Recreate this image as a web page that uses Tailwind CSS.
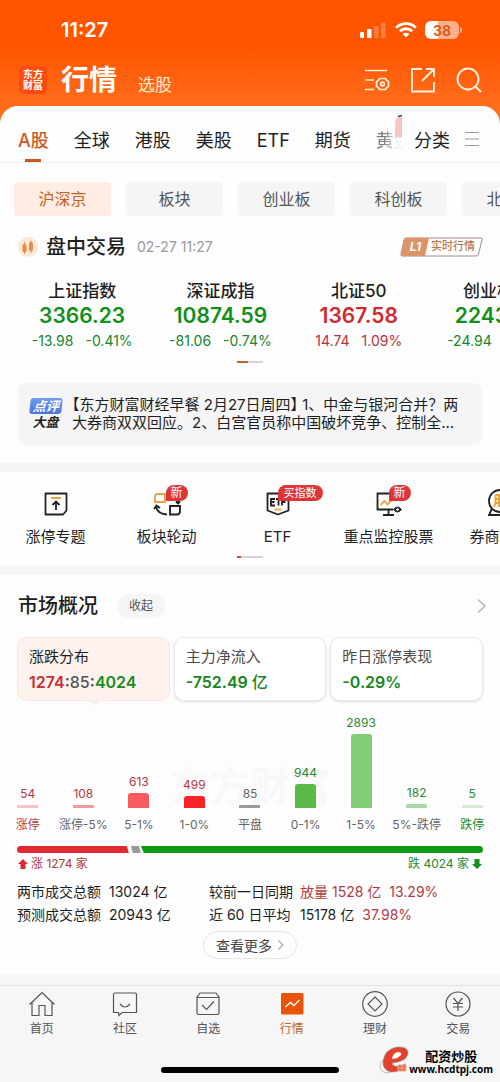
<!DOCTYPE html>
<html lang="zh-CN">
<head>
<meta charset="utf-8">
<meta name="viewport" content="width=device-width, initial-scale=1">
<title>行情</title>
<script src="https://cdn.jsdelivr.net/npm/@tailwindcss/browser@4"></script>
</head>
<body class="bg-[#fdfdfd] font-['Inter','Noto_Sans_CJK_SC',sans-serif] text-[#1f1f1f] overflow-x-hidden">
<div class="relative flex flex-col">

<!-- Status bar and page title -->
<header class="bg-linear-to-b from-[#ff5500] from-40% to-[#ff7420] pb-[18px] text-white">
  <div class="flex h-[60px] items-center justify-between pr-[38px] pl-[61px]">
    <time class="text-[20px] font-semibold">11:27</time>
    <div class="flex items-center gap-2">
      <svg class="h-4 w-[27px]" viewBox="0 0 27 16" fill="#fff"><rect x="0" y="10" width="4" height="6" rx="1"/><rect x="7" y="7" width="4.500" height="9" rx="1"/><rect x="14" y="4" width="4.500" height="12" rx="1" opacity=".25"/><rect x="21" y="0" width="4.500" height="16" rx="1" opacity=".25"/></svg>
      <svg class="h-4 w-[22px]" viewBox="0 0 22 16" fill="none" stroke="#fff" stroke-width="2.800"><path d="M1.200 5.700a14 14 0 0 1 19.600 0M4.800 9.300a8.800 8.800 0 0 1 12.400 0"/><path d="M11 15.500 7.600 12a4.900 4.900 0 0 1 6.800 0z" fill="#fff" stroke="none"/></svg>
      <div class="flex items-center gap-px">
        <div class="flex h-[18px] w-[34px] items-center justify-center rounded-[6px] bg-linear-to-r from-white from-38% to-[#ffb08a] to-38% text-[14px] font-bold text-[#d9601f]">38</div>
        <div class="h-[6px] w-[2px] rounded-r-full bg-[#ffb08a]"></div>
      </div>
    </div>
  </div>
  <div class="flex h-[46px] items-center pr-[18px] pb-[6px] pl-[19px]">
    <div class="grid h-[28px] w-[28px] shrink-0 place-content-center rounded-[5px] bg-[#fb4a12] text-center text-[10px] leading-[11px] font-bold">东方<br>财富</div>
    <h1 class="ml-[14px] text-[28px] leading-10 font-bold">行情</h1>
    <a href="#" class="mt-[10px] ml-[21px] text-[17px] leading-6 text-[#ffe8c8]">选股</a>
    <div class="ml-auto flex items-center gap-5 text-[#fff0dc]">
      <button aria-label="设置"><svg class="h-[26px] w-[26px]" viewBox="0 0 26 26" fill="none" stroke="currentColor" stroke-width="1.700"><path d="M1 3.500h22M1 13h9M1 22.500h9"/><path d="M15.500 11.500h6l1 1.800 2 1.200v5l-2 1.200-1 1.800h-6l-1-1.800-2-1.200v-5l2-1.200z" stroke-linejoin="round"/><circle cx="18.500" cy="17" r="1.800"/></svg></button>
      <button aria-label="分享"><svg class="h-[26px] w-[26px]" viewBox="0 0 26 26" fill="none" stroke="currentColor" stroke-width="1.800"><path d="M12 2H2v22.500h22V15M16 2h8v8M24 2 12 14"/></svg></button>
      <button aria-label="搜索"><svg class="h-[26px] w-[26px]" viewBox="0 0 26 26" fill="none" stroke="currentColor" stroke-width="1.900"><circle cx="12" cy="12" r="10.500"/><path d="m19.500 19.500 5.500 5.500"/></svg></button>
    </div>
  </div>
</header>

<main class="-mt-[18px] rounded-t-[18px] bg-[#fdfdfd]">
  <!-- Market tabs -->
  <nav class="flex h-[57px] border-b border-[#ececec] pr-5 pl-[18px] text-[18px] whitespace-nowrap">
    <div class="flex min-w-0 flex-1 gap-[25px] overflow-hidden">
      <a href="#" class="flex flex-col items-center pt-[21px] font-medium text-[#cc5a1e]"><span class="leading-7">A股</span><span class="mt-1 h-[3px] w-4 bg-[#c65a22]"></span></a>
      <a href="#" class="pt-[21px] leading-7">全球</a>
      <a href="#" class="pt-[21px] leading-7">港股</a>
      <a href="#" class="pt-[21px] leading-7">美股</a>
      <a href="#" class="pt-[21px] leading-7">ETF</a>
      <a href="#" class="pt-[21px] leading-7">期货</a>
      <a href="#" class="relative bg-linear-to-r from-[#777] from-20% to-[#eee] to-60% bg-clip-text pt-[21px] leading-7 text-transparent">黄金<svg class="absolute top-[9px] left-[18px] h-[22px] w-[9px]" viewBox="0 0 9 22"><path d="M1 22V8Q1 2 9 2v20z" fill="#fbc4c4"/><path d="M4 2q2-2 5-1" stroke="#444" stroke-width="1.500" fill="none"/></svg></a>
    </div>
    <a href="#" class="pt-[21px] pl-3 leading-7">分类</a>
    <button aria-label="菜单" class="ml-[14px] pt-[10px]"><svg class="h-4 w-4" viewBox="0 0 16 16" stroke="#999" stroke-width="1.200"><path d="M1 1.500h14M1 8h14M1 14.500h14"/></svg></button>
  </nav>

  <!-- Board filter -->
  <div class="mt-[19px] flex gap-[15px] overflow-hidden pl-[14px] text-[16px] text-[#555]">
    <button class="h-[34px] w-[97px] shrink-0 rounded-[4px] bg-[#ffece2] text-[#c85f24]">沪深京</button>
    <button class="h-[34px] w-[97px] shrink-0 rounded-[4px] bg-[#f5f5f5]">板块</button>
    <button class="h-[34px] w-[97px] shrink-0 rounded-[4px] bg-[#f5f5f5]">创业板</button>
    <button class="h-[34px] w-[97px] shrink-0 rounded-[4px] bg-[#f5f5f5]">科创板</button>
    <button class="h-[34px] w-[97px] shrink-0 rounded-[4px] bg-[#f5f5f5]">北交所</button>
  </div>

  <div class="flex h-[61px] items-center pr-[17px] pl-[18px]">
    <svg class="h-5 w-5" viewBox="0 0 20 20"><circle cx="10" cy="10" r="10" fill="#fde8d8"/><g fill="#e58d48"><rect x="4.500" y="7" width="4" height="8" rx="1.500"/><rect x="11" y="5" width="4" height="9" rx="1.500"/><path d="M6 5h1v12H6zM12.500 3.500h1v12.500h-1z"/></g></svg>
    <h2 class="ml-2 text-[20px] font-medium">盘中交易</h2>
    <time class="ml-[11px] text-[14px] text-[#999]">02-27 11:27</time>
    <a href="#" class="relative ml-auto flex h-[20px] w-[83px] items-center text-[11px] font-medium text-[#b87650]">
      <svg class="absolute inset-0 h-[20px] w-[83px]" viewBox="0 0 83 20"><path d="M6 1h75q1.500 0 1 2l-3.500 14q-.5 2-2.500 2H2q-1.500 0-1-2L4 3q.5-2 2-2z" fill="#fff" stroke="#a08b80"/><path d="M6 1h23l-4 18H2q-1.500 0-1-2L4 3q.5-2 2-2z" fill="#dc9566"/></svg>
      <span class="relative w-[31px] text-center text-[12px] font-bold text-white italic">L1</span><span class="relative">实时行情</span>
    </a>
  </div>

  <!-- Index quotes -->
  <div class="flex overflow-hidden pt-[2px] pl-[13px] text-center leading-6 whitespace-nowrap text-[#15862a]">
    <div class="flex w-[28.4%] shrink-0 flex-col gap-px"><h3 class="text-[17px] font-medium text-[#1f1f1f]">上证指数</h3><p class="text-[21px] font-semibold text-[#12901b]">3366.23</p><p class="flex justify-center gap-3 text-[14px]"><span>-13.98</span><span>-0.41%</span></p></div>
    <div class="flex w-[28.4%] shrink-0 flex-col gap-px"><h3 class="text-[17px] font-medium text-[#1f1f1f]">深证成指</h3><p class="text-[21px] font-semibold text-[#12901b]">10874.59</p><p class="flex justify-center gap-3 text-[14px]"><span>-81.06</span><span>-0.74%</span></p></div>
    <div class="flex w-[28.4%] shrink-0 flex-col gap-px text-[#b5303c]"><h3 class="text-[17px] font-medium text-[#1f1f1f]">北证50</h3><p class="text-[21px] font-semibold text-[#d02a30]">1367.58</p><p class="flex justify-center gap-3 text-[14px]"><span>14.74</span><span>1.09%</span></p></div>
    <div class="flex w-[28.4%] shrink-0 flex-col gap-px"><h3 class="text-[17px] font-medium text-[#1f1f1f]">创业板指</h3><p class="text-[21px] font-semibold text-[#12901b]">2243.67</p><p class="flex justify-center gap-3 text-[14px]"><span>-24.94</span><span>-1.10%</span></p></div>
  </div>
  <div class="mt-2 flex justify-center"><span class="h-[2px] w-[11px] bg-[#c8622e]"></span><span class="h-[2px] w-[15px] bg-[#d4d4d8]"></span></div>

  <!-- Market commentary -->
  <a href="#" class="mx-[18px] mt-5 flex rounded-[8px] bg-[#f5f5f5] py-[13px] pl-[11px]">
    <span class="flex w-[33px] shrink-0 flex-col items-center text-[13px] leading-4 font-bold italic">
      <span class="mt-[2px] w-8 -skew-x-6 rounded-[3px] bg-linear-to-b from-[#6f9cf2] to-[#4b74dc] text-center text-white">点评</span><span>大盘</span>
    </span>
    <span class="ml-[10px] text-[15px] leading-[18px] whitespace-nowrap"><span class="[font-feature-settings:'halt']">【</span>东方财富财经早餐 2月27日周四<span class="[font-feature-settings:'halt']">】</span> 1、中金与银河合并？两<br>大券商双双回应。2、白宫官员称中国破坏竞争、控制全...</span>
  </a>

  <div class="mt-[18px] h-[9px] bg-[#f5f5f5]"></div>

  <!-- Shortcuts -->
  <nav class="flex overflow-hidden pt-5 text-[15px] leading-[22px] whitespace-nowrap">
    <a href="#" class="flex w-[22.2%] shrink-0 flex-col items-center gap-[10px]">
      <svg class="h-6 w-6" viewBox="0 0 24 24" fill="none" stroke="#222" stroke-width="1.800"><path d="M1.500 1.500h21v17l-3.500 4H1.500z" stroke-linejoin="round"/><path d="M7 6h10" stroke="#eba53c" stroke-width="2"/><path d="M12 18V9.500M8.500 13 12 9.500l3.500 3.500"/></svg>涨停专题</a>
    <a href="#" class="flex w-[22.2%] shrink-0 flex-col items-center gap-[10px]">
      <span class="relative"><svg class="h-6 w-7" viewBox="0 0 28 24" fill="none" stroke="#222" stroke-width="1.900"><path d="M4 2h8v8H2V5q0-3 2-3z" stroke="#e6a549"/><path d="M17 14h10v5q0 3.500-3 3.500h-7zM3 14q1 8 11 8.500M1 17l2.500-3.500L7 16M25 7v4m-2-1.500 2 2 2-2"/></svg>
      <span class="absolute -top-[7px] left-[13px] rounded-[8px] rounded-bl-none bg-[#dc3639] px-[5px] text-[12px] leading-4 text-white">新</span></span>板块轮动</a>
    <a href="#" class="flex w-[22.2%] shrink-0 flex-col items-center gap-[10px]">
      <span class="relative"><svg class="h-6 w-6" viewBox="0 0 24 24" fill="none" stroke="#222" stroke-width="1.800"><path d="M1.500 1.500h21v17L12 22.500l-10.500-4z" stroke-linejoin="round"/><path d="M8.500 17.500h7" stroke="#eba53c"/><path d="M9 7H5v6.500h4M5 10h3.500M10 7h5M12.500 7v6.500M20 7h-4v6.500M16 10h3.500"/></svg>
      <span class="absolute -top-[7px] left-3 rounded-[8px] rounded-bl-none bg-[#dc3639] px-[6px] text-[11px] leading-4 text-white">买指数</span></span>ETF</a>
    <a href="#" class="flex w-[22.2%] shrink-0 flex-col items-center gap-[10px]">
      <span class="relative"><svg class="h-6 w-[26px]" viewBox="0 0 26 24" fill="none" stroke="#222" stroke-width="1.800"><path d="M25 9V1.500H1.500v16H17M12.500 17.500V23M7 23h11"/><path d="m4.500 13 4-4 3 3.500 4-4" stroke="#eba53c"/><path d="M17.500 17.500q4-5 8 0-4 5-8 0z" fill="#222" stroke-width="1"/><circle cx="21.500" cy="17.500" r="1.300" fill="#fff" stroke="none"/></svg>
      <span class="absolute -top-[7px] left-[13px] rounded-[8px] rounded-bl-none bg-[#dc3639] px-[5px] text-[12px] leading-4 text-white">新</span></span>重点监控股票</a>
    <a href="#" class="flex w-[22.2%] shrink-0 flex-col items-center gap-[10px]">
      <svg class="-mt-1 h-7 w-6" viewBox="0 0 24 28" fill="none" stroke="#222" stroke-width="1.800"><circle cx="12" cy="13" r="11"/><path d="M4 20.500 1 27h22l-3-6.500"/><path d="M7.500 7h3.500v12M7.500 7v8l-1.500 4M7.500 11H11M7.500 15H11M13.500 8H18M14 12h4l-4 7M14 14l4 5" stroke="#eba53c" stroke-width="2"/></svg>券商股票</a>
  </nav>
  <div class="mt-2 flex justify-center pb-2"><span class="h-[2px] w-1 bg-[#a85a38]"></span><span class="h-[2px] w-[22px] bg-[#d4d4d8]"></span></div>
  <div class="h-[9px] bg-[#f5f5f5]"></div>

  <!-- Market overview -->
  <section>
    <div class="flex h-[62px] items-center px-[18px]">
      <h2 class="text-[20px] font-medium">市场概况</h2>
      <button class="ml-[19px] h-6 rounded-full bg-[#f5f5f5] px-3 text-[12px] text-[#555]">收起</button>
      <a href="#" aria-label="更多" class="-mr-[5px] ml-auto"><svg class="h-4 w-[10px]" viewBox="0 0 10 16" fill="none" stroke="#b5b5b5" stroke-width="1.500"><path d="m1 1.500 7 6.500-7 6.500"/></svg></a>
    </div>
    <div class="grid grid-cols-3 gap-1 px-[17px] text-[15px]">
      <button class="relative h-16 rounded-[10px] border border-[#fae6de] bg-[#fef2ee] pl-[11px] text-left">
        <span class="block leading-5">涨跌分布</span><span class="mt-[5px] block text-[16px] leading-5 font-semibold whitespace-nowrap text-[#555]"><span class="text-[#c92f34]">1274</span>:<span class="font-medium">85</span>:<span class="text-[#188c20]">4024</span></span>
        <svg class="absolute -bottom-[6px] left-[69px] h-[6px] w-4" viewBox="0 0 16 6"><path d="M0 0h16q-3 0-5 3-3 4-6 0-2-3-5-3z" fill="#fdebe4"/></svg>
      </button>
      <button class="h-16 rounded-[10px] border border-[#ebebeb] bg-white pl-[11px] text-left shadow-sm">
        <span class="block leading-5 text-[#4c4c4c]">主力净流入</span><span class="mt-[5px] block text-[16px] leading-5 font-semibold text-[#178522]">-752.49 <span class="font-medium">亿</span></span>
      </button>
      <button class="h-16 rounded-[10px] border border-[#ebebeb] bg-white pl-[11px] text-left shadow-sm">
        <span class="block leading-5 text-[#4c4c4c]">昨日涨停表现</span><span class="mt-[5px] block text-[16px] leading-5 font-semibold text-[#178522]">-0.29%</span>
      </button>
    </div>

    <!-- Distribution chart -->
    <figure class="relative">
      <div aria-hidden="true" class="absolute inset-x-0 top-[62px] text-center text-[40px] leading-[48px] font-bold text-[#f8f8f8]">东方财富</div>
      <div class="relative grid h-[107px] grid-cols-9 items-end text-center text-[12px] leading-4 text-[#b23a41]">
        <div class="flex flex-col items-center gap-[3px]">54<i class="h-[3px] w-[21px] bg-[#f9c3c6]"></i></div>
        <div class="flex flex-col items-center gap-[3px]">108<i class="h-[3px] w-[21px] bg-[#f39a9e]"></i></div>
        <div class="flex flex-col items-center gap-[3px]">613<i class="h-[15px] w-[21px] rounded-t-[3px] bg-[#fa5b60]"></i></div>
        <div class="flex flex-col items-center gap-[3px]">499<i class="h-[12px] w-[21px] rounded-t-[3px] bg-[#f92227]"></i></div>
        <div class="flex flex-col items-center gap-[3px] text-[#666]">85<i class="h-[3px] w-[21px] bg-[#999]"></i></div>
        <div class="flex flex-col items-center gap-[3px] text-[#278a2c]">944<i class="h-[24px] w-[21px] rounded-t-[3px] bg-[#59b947]"></i></div>
        <div class="flex flex-col items-center gap-[3px] text-[#278a2c]">2893<i class="h-[74px] w-[21px] rounded-t-[3px] bg-[#83cc76]"></i></div>
        <div class="flex flex-col items-center gap-[3px] text-[#278a2c]">182<i class="h-[4px] w-[21px] rounded-t-[2px] bg-[#a9d9a4]"></i></div>
        <div class="flex flex-col items-center gap-[3px] text-[#278a2c]">5<i class="h-[3px] w-[21px] bg-[#d4ebd1]"></i></div>
      </div>
      <figcaption class="relative mt-[9px] grid grid-cols-9 text-center text-[12px] leading-4 whitespace-nowrap text-[#666]">
        <span class="text-[#b23a41]">涨停</span><span>涨停-5%</span><span>5-1%</span><span>1-0%</span><span>平盘</span><span>0-1%</span><span>1-5%</span><span>5%-跌停</span><span class="text-[#188c20]">跌停</span>
      </figcaption>
    </figure>

    <div class="mx-[17px] mt-[13px] flex h-[7px]">
      <div class="w-[24%] rounded-l-full bg-[#e32a30] [clip-path:polygon(0_0,calc(100%_-_2px)_0,100%_100%,0_100%)]"></div>
      <div class="ml-[2px] w-[10px] bg-[#999] [clip-path:polygon(0_0,8px_0,100%_100%,2px_100%)]"></div>
      <div class="flex-1 rounded-r-full bg-[#0f9a16] [clip-path:polygon(0_0,100%_0,100%_100%,3px_100%)]"></div>
    </div>
    <div class="mx-[18px] mt-[3px] flex justify-between text-[12px] leading-4">
      <span class="flex items-center gap-[3px] text-[#b23a41]"><svg class="h-[10px] w-[10px]" viewBox="0 0 10 10" fill="#d92b31"><path d="m5 0 5 5H7.500v5h-5V5H0z"/></svg>涨 1274 家</span>
      <span class="flex items-center gap-[3px] text-[#278a2c]">跌 4024 家<svg class="h-[10px] w-[10px]" viewBox="0 0 10 10" fill="#12901b"><path d="m5 10 5-5H7.500V0h-5v5H0z"/></svg></span>
    </div>

    <dl class="mt-2 grid grid-cols-[92px_100px_91px_1fr] px-[17px] text-[14px] leading-[23px] whitespace-nowrap">
      <dt>两市成交总额</dt><dd>13024 亿</dd><dt>较前一日同期</dt><dd class="flex gap-2 text-[#b23a41]"><span>放量 1528 亿</span><span>13.29%</span></dd>
      <dt>预测成交总额</dt><dd>20943 亿</dd><dt>近 60 日平均</dt><dd class="flex gap-2"><span>15178 亿</span><span class="text-[#b23a41]">37.98%</span></dd>
    </dl>
    <div class="mt-[5px] flex justify-center pb-[15px]">
      <button class="flex h-7 items-center gap-[6px] rounded-full border border-[#e8e8e8] px-3 text-[14px] text-[#444]">查看更多<svg class="h-[10px] w-[6px]" viewBox="0 0 6 10" fill="none" stroke="#aaa" stroke-width="1.200"><path d="m.5.500 4.500 4.500-4.500 4.500"/></svg></button>
    </div>
  </section>
  <div class="h-[11px] bg-[#f6f6f4]"></div>
</main>

<!-- Bottom navigation -->
<footer class="border-t border-[#e4e4e4] bg-[#f6f6f6] pb-[9px]">
  <nav class="grid grid-cols-6 pt-[5px] text-center text-[12px] leading-4 text-[#555]">
    <a href="#" class="flex flex-col items-center gap-1"><svg class="h-[26px] w-[26px]" viewBox="0 0 26 26" fill="none" stroke="#555" stroke-width="1.200"><path d="M.5 13.500 13 1.500l12.500 12M3 11.500v13h7v-10h6v10h7v-13"/></svg>首页</a>
    <a href="#" class="flex flex-col items-center gap-1"><svg class="h-[26px] w-[26px]" viewBox="0 0 26 26" fill="none" stroke="#555" stroke-width="1.200"><path d="M3 2h20q1.500 0 1.500 1.500v18H10l-3 3-.5-3H1.500v-18Q1.500 2 3 2z"/><path d="M8 13q5 6 10 0"/></svg>社区</a>
    <a href="#" class="flex flex-col items-center gap-1"><svg class="h-[26px] w-[26px]" viewBox="0 0 26 26" fill="none" stroke="#555" stroke-width="1.200"><path d="M5 2h16l3 4v16q0 1.500-1.500 1.500h-19Q2 23.500 2 22V6zM2 6.500h22M7 14l4.500 4.500L19 10.500"/></svg>自选</a>
    <a href="#" aria-current="page" class="flex flex-col items-center gap-1 text-[#b8672f]"><svg class="h-[26px] w-[26px]" viewBox="0 0 26 26"><rect x="2" y="2" width="22.500" height="21.500" rx="1.500" fill="#ea5408"/><path d="m6.500 16 5-4.500 3.500 3 5.500-5.500" fill="none" stroke="#fff" stroke-width="1.400"/></svg>行情</a>
    <a href="#" class="flex flex-col items-center gap-1"><svg class="h-[26px] w-[26px]" viewBox="0 0 26 26" fill="none" stroke="#555" stroke-width="1.200"><circle cx="13" cy="13" r="12.300"/><path d="m13 6 7 7-7 7-7-7z"/></svg>理财</a>
    <a href="#" class="flex flex-col items-center gap-1"><svg class="h-[26px] w-[26px]" viewBox="0 0 26 26" fill="none" stroke="#555" stroke-width="1.200"><circle cx="13" cy="13" r="12"/><path d="m8.500 7 4.500 5.500L17.500 7M13 12.500V20M8 12.500h10M8 16h10"/></svg>交易</a>
  </nav>
  <div class="mx-auto mt-[30px] h-[6px] w-[178px] rounded-full bg-black"></div>
</footer>

<!-- Site watermark -->
<div class="absolute right-[7px] bottom-[7px] flex items-end text-black">
  <svg class="h-[30px] w-8" viewBox="0 0 32 30"><circle cx="8" cy="21" r="7" fill="none" stroke="#bbb"/><path d="M27 19Q22 28 12 27 3 25 4 16 6 4 18 2q12-1 11 7-2 8-16 9 1 6 13 1z" fill="#e5402c" stroke="#77aaa4" stroke-width=".6"/><path d="M13 14q1-7 7-7 4 1 1 4-3 3-8 3z" fill="#fff"/><path d="M19 20h8v6h-8zM19 23h8M23 20v7" stroke="#f7b09a" fill="#ec5b3d"/></svg>
  <div class="-ml-[2px] text-center font-bold"><div class="text-[13px] leading-[13px]">配资炒股</div><div class="font-['Noto_Sans',sans-serif] text-[10px] leading-3">www.hcdtpj.com</div></div>
</div>
</div>
</body>
</html>
